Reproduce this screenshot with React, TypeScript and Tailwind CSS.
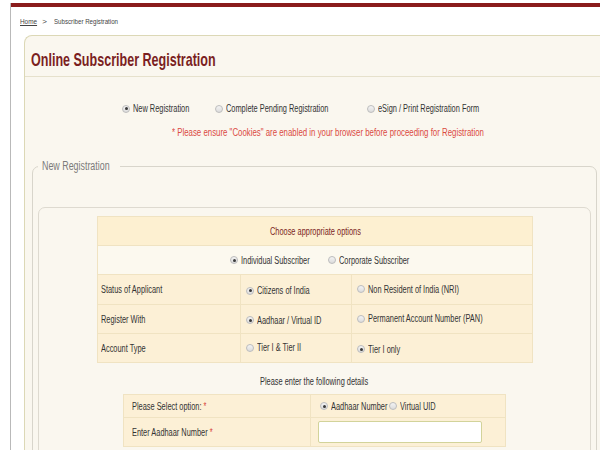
import React from "react";

const font = { fontFamily: '"Liberation Sans", Arial, sans-serif' };

// the original page uses a narrow face; squeeze Liberation Sans to its width
const narrow = "inline-block origin-left scale-x-[0.74] whitespace-nowrap";

function Radio({ checked }: { checked?: boolean }) {
  return (
    <span className="inline-flex h-[8px] w-[8px] shrink-0 items-center justify-center rounded-full border border-[#bdbdbd] bg-gradient-to-b from-[#f4f4f4] to-[#dcdcdc]">
      {checked && <span className="h-[3px] w-[3px] rounded-full bg-[#3a3a3a]" />}
    </span>
  );
}

function Opt({ checked, label, className = "" }: { checked?: boolean; label: string; className?: string }) {
  return (
    <span className={`inline-flex items-center gap-[3px] overflow-visible ${className}`}>
      <Radio checked={checked} />
      <span className={narrow}>{label}</span>
    </span>
  );
}

const cell = "border border-[#f0e3c2]";

export default function App() {
  return (
    <div className="h-[450px] w-[600px] overflow-hidden bg-white text-[10px] text-[#333]" style={font}>
      <div className="ml-[10px] h-full border-l border-[#b9b9b9]">
        <div className="mt-[3px] h-[4px] bg-[#8a1c1c]" />
        <div className="flex h-[28px] items-center pl-[9px] pt-[1px] text-[8px] text-[#444]">
          <span className="inline-block origin-left scale-x-[0.8] underline">Home</span>
          <span className="ml-[1px] mr-[7px]">&gt;</span>
          <span className="inline-block origin-left scale-x-[0.77] whitespace-nowrap">Subscriber Registration</span>
        </div>
        <div className="ml-[13px] rounded-tl-[8px] border-l border-t border-[#dcd8b6] bg-[#faf7ef] pb-4">
          <div className="flex h-[41px] items-center border-b border-[#e6e1cc] pl-[6px] pt-[8px]">
            <h1 className="inline-block origin-left scale-x-[0.66] whitespace-nowrap text-[19px] font-bold text-[#7b1f1f]">
              Online Subscriber Registration
            </h1>
          </div>
          <div className="flex pl-[97px] pt-[24px] text-[10px] text-[#333]">
            <Opt checked label="New Registration" className="w-[93px]" />
            <Opt label="Complete Pending Registration" className="w-[152px]" />
            <Opt label="eSign / Print Registration Form" />
          </div>
          <p className="pl-[147px] pt-[9px] text-[10px] text-[#db4a3f]">
            <span className="inline-block origin-left scale-x-[0.785] whitespace-nowrap">
              * Please ensure "Cookies" are enabled in your browser before proceeding for Registration
            </span>
          </p>
          <fieldset className="ml-[7px] mr-[3px] mt-[17px] rounded-[7px] border border-[#d8d5cb] px-[5px] pb-4 pt-[32px]">
            <legend className="w-[82px] overflow-visible px-[4px] text-[12px] text-[#7a7a7a]">
              <span className={narrow}>New Registration</span>
            </legend>
            <div className="rounded-[7px] border border-[#dedad0] pb-4 pt-[8px]">
              <table className="ml-[58px] w-[436px] border-collapse text-[10px] text-[#333]">
                <tbody>
                  <tr className="h-[29px] bg-[#fdf0d1]">
                    <td colSpan={3} className={`${cell} text-center text-[#7b1f1f]`}>
                      <span className="inline-block origin-center scale-x-[0.74] whitespace-nowrap">
                        Choose appropriate options
                      </span>
                    </td>
                  </tr>
                  <tr className="h-[29px] bg-[#fcf9ef]">
                    <td colSpan={3} className={`${cell} pl-[132px]`}>
                      <span className="flex">
                        <Opt checked label="Individual Subscriber" className="w-[98px]" />
                        <Opt label="Corporate Subscriber" />
                      </span>
                    </td>
                  </tr>
                  <tr className="h-[30px] bg-[#fcf0d6]">
                    <td className={`w-[143px] ${cell} pl-[3px]`}>
                      <span className={narrow}>Status of Applicant</span>
                    </td>
                    <td className={`w-[111px] ${cell} pl-[5px]`}>
                      <Opt checked label="Citizens of India" />
                    </td>
                    <td className={`${cell} pl-[5px]`}>
                      <Opt label="Non Resident of India (NRI)" />
                    </td>
                  </tr>
                  <tr className="h-[29px] bg-[#fcf0d6]">
                    <td className={`${cell} pl-[3px]`}>
                      <span className={narrow}>Register With</span>
                    </td>
                    <td className={`${cell} pl-[5px]`}>
                      <Opt checked label="Aadhaar / Virtual ID" />
                    </td>
                    <td className={`${cell} pl-[5px]`}>
                      <Opt label="Permanent Account Number (PAN)" />
                    </td>
                  </tr>
                  <tr className="h-[29px] bg-[#fcf0d6]">
                    <td className={`${cell} pl-[3px]`}>
                      <span className={narrow}>Account Type</span>
                    </td>
                    <td className={`${cell} pl-[5px]`}>
                      <Opt label="Tier I & Tier II" />
                    </td>
                    <td className={`${cell} pl-[5px]`}>
                      <Opt checked label="Tier I only" />
                    </td>
                  </tr>
                </tbody>
              </table>
              <p className="pb-[5px] pt-[11px] text-center text-[10px] text-[#333]">
                <span className="inline-block origin-center scale-x-[0.74] whitespace-nowrap">
                  Please enter the following details
                </span>
              </p>
              <table className="ml-[84px] w-[383px] border-collapse text-[10px] text-[#333]">
                <tbody>
                  <tr className="h-[23px] bg-[#fcf0d6]">
                    <td className={`w-[187px] ${cell} pl-[8px]`}>
                      <span className={narrow}>
                        Please Select option: <span className="text-[#d8443c]">*</span>
                      </span>
                    </td>
                    <td className={`${cell} pl-[9px]`}>
                      <span className="flex">
                        <Opt checked label="Aadhaar Number" className="w-[69px]" />
                        <Opt label="Virtual UID" />
                      </span>
                    </td>
                  </tr>
                  <tr className="h-[29px] bg-[#fcf0d6]">
                    <td className={`${cell} pl-[8px]`}>
                      <span className={narrow}>
                        Enter Aadhaar Number <span className="text-[#d8443c]">*</span>
                      </span>
                    </td>
                    <td className={`${cell} pl-[7px]`}>
                      <div className="h-[22px] w-[164px] rounded-[2px] border border-[#d2d39a] bg-white" />
                    </td>
                  </tr>
                </tbody>
              </table>
            </div>
          </fieldset>
        </div>
      </div>
    </div>
  );
}
